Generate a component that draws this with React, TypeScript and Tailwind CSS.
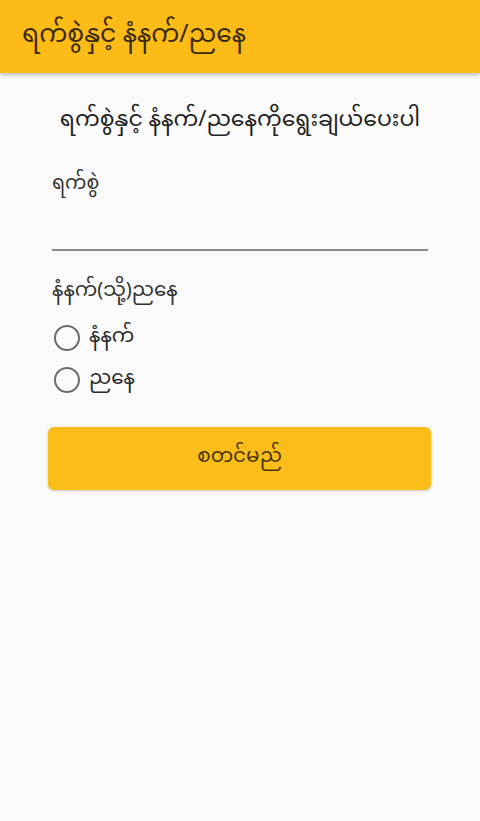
const font = { fontFamily: '"Noto Sans Myanmar", "Padauk", "Myanmar Text", "Noto Sans", sans-serif' };

function Radio({ label }: { label: string }) {
  return (
    <label className="flex h-[42px] items-center gap-[9px] pl-[2px]">
      <span className="h-[26px] w-[26px] rounded-full border-[2.5px] border-[#6b6b6b]" />
      <span className="text-[20px] text-[#2a2a2a]">{label}</span>
    </label>
  );
}

export default function App() {
  return (
    <div className="flex h-[821px] w-[480px] flex-col bg-[#fafafa]" style={font}>
      <header className="flex h-[73px] items-center bg-[#fdbb17] px-[22px] shadow-[0_2px_4px_rgba(0,0,0,0.25)]">
        <h1 className="text-[25px] text-[#3a2a0c]">ရက်စွဲနှင့် နံနက်/ညနေ</h1>
      </header>
      <main className="flex flex-col px-[52px] pt-[32px]">
        <p className="text-center text-[22px] text-[#222]">ရက်စွဲနှင့် နံနက်/ညနေကိုရွေးချယ်ပေးပါ</p>
        <p className="mt-[33px] text-[19px] text-[#333]">ရက်စွဲ</p>
        <div className="mt-[49px] h-[2px] w-[376px] bg-[#8a8a8a]" />
        <p className="mt-[26px] text-[20px] text-[#333]">နံနက်(သို့)ညနေ</p>
        <div className="mt-[10px] flex flex-col">
          <Radio label="နံနက်" />
          <Radio label="ညနေ" />
        </div>
        <button className="-ml-[4px] mt-[26px] h-[63px] w-[383px] rounded-[6px] bg-[#fbbd18] text-[20px] text-[#4a3510] shadow-[0_1px_3px_rgba(0,0,0,0.2)]">
          စတင်မည်
        </button>
      </main>
    </div>
  );
}
